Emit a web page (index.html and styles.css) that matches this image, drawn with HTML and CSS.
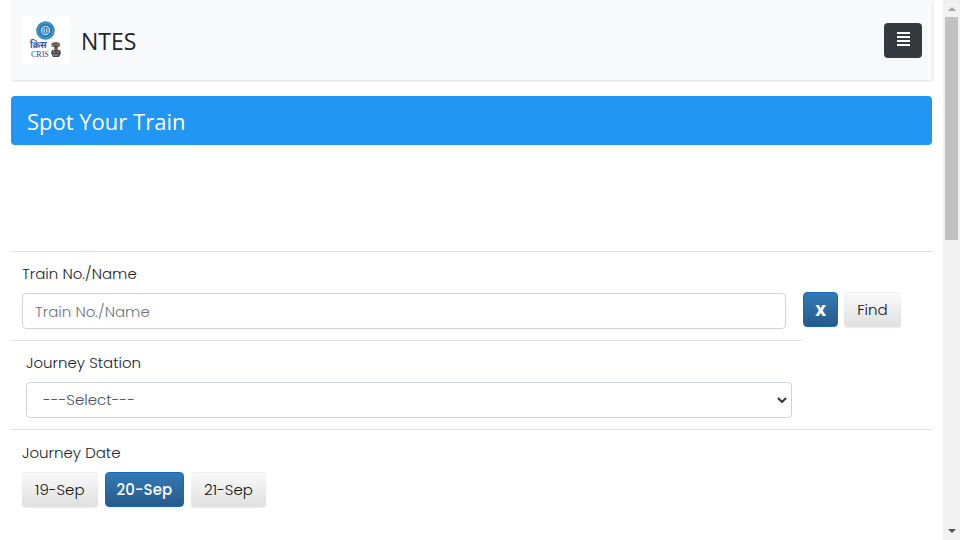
FILE: index.html
```html
<!DOCTYPE html>
<html lang="en">
<head>
<meta charset="utf-8">
<title>NTES</title>
<link rel="stylesheet" href="styles.css">
</head>
<body>
<div class="page">
  <header class="navbar">
    <svg class="logo" viewBox="0 0 48 48" role="img" aria-label="CRIS">
      <rect width="48" height="48" fill="#fff"/>
      <circle cx="23.5" cy="14.5" r="9.3" fill="#2b83b8"/>
      <circle cx="23.5" cy="14.5" r="7.5" fill="none" stroke="#8fc5e0" stroke-width="1" stroke-dasharray="1 1.2"/>
      <circle cx="23.5" cy="14.5" r="5.4" fill="#a9d8ee" stroke="#14649c"/>
      <path d="M20 17h7M21 16v-3.500l2.500-1.500 2.500 1.500V16M23.500 12v4" fill="none" stroke="#286f9c"/>
      <text class="logo-hindi" x="8" y="32">क्रिस</text>
      <text class="logo-name" x="9" y="41">CRIS</text>
      <path d="M29 28q1-2 4.500-2t5 2l-1 3h-1.500v3h-4v-3h-2z" fill="#827566"/>
      <path d="M31 28h1.500m3 0h1M32 30.500h4M34 26v7" stroke="#403936" stroke-width=".8"/>
      <path d="M30 34h8l1 3-2 4h-6l-2-4z" fill="#4c4a49"/>
      <path d="M31 36h2m2 0h2M31 39h5" stroke="#aaa49d"/>
    </svg>
    <span class="brand">NTES</span>
    <button class="menu" type="button" aria-label="Menu">
      <svg viewBox="0 0 13 14" width="13" height="14"><path d="M0 1h13M0 5h13M0 9h13M0 13h13" stroke="#fff" stroke-width="2"/></svg>
    </button>
  </header>
  <main>
    <h1 class="banner">Spot Your Train</h1>
    <form class="search">
      <div class="row train">
        <div class="field">
          <label for="train">Train No./Name</label>
          <input id="train" type="text" placeholder="Train No./Name">
        </div>
        <div class="actions">
          <button class="btn primary clear" type="button">X</button>
          <button class="btn" type="button">Find</button>
        </div>
      </div>
      <div class="row station">
        <label for="station">Journey Station</label>
        <div class="picker">
          <select id="station"><option>---Select---</option></select>
          <svg class="chevron" viewBox="0 0 10 6" width="10" height="6"><path d="M1 1l4 4 4-4" fill="none" stroke="#333" stroke-width="2"/></svg>
        </div>
      </div>
      <fieldset class="row dates">
        <legend>Journey Date</legend>
        <div class="choices">
          <button class="btn" type="button">19-Sep</button>
          <button class="btn primary" type="button">20-Sep</button>
          <button class="btn" type="button">21-Sep</button>
        </div>
      </fieldset>
    </form>
  </main>
</div>
<div class="scrollbar" aria-hidden="true">
  <svg class="arrow" viewBox="0 0 17 17"><path d="M5 11h8l-4-4z" fill="#a3a3a3"/></svg>
  <div class="track"><div class="thumb"></div></div>
  <svg class="arrow" viewBox="0 0 17 17"><path d="M5 6h8l-4 4z" fill="#505050"/></svg>
</div>
</body>
</html>
```
FILE: styles.css
```css
* { box-sizing: border-box; }
body {
  margin: 0;
  height: 100vh;
  overflow: hidden;
  display: grid;
  grid-template-columns: 1fr 17px;
  background: #fff;
  color: #212529;
  font: 300 15px/24px Poppins, Inter, sans-serif;
}
.page { padding: 0 11px; overflow: hidden; }
.navbar {
  display: flex;
  align-items: center;
  height: 80px;
  padding: 0 10px 0 11px;
  background: #f8f9fa;
  box-shadow: 1px 1px 2px rgba(0, 0, 0, .12);
}
.logo { width: 48px; height: 48px; }
.logo-hindi { font: bold 9px/9px "Noto Sans Devanagari", "Noto Sans", sans-serif; fill: #2d5bab; }
.logo-name { font: 8px/8px "Liberation Serif", serif; fill: #1d4590; }
.brand { margin-left: 11px; padding-top: 2px; font: 400 23px/36px "Segoe UI", "Open Sans", sans-serif; }
.menu {
  margin-left: auto;
  display: flex;
  align-items: center;
  justify-content: center;
  width: 38px;
  height: 35px;
  padding: 0 0 2px;
  border: 0;
  border-radius: 4px;
  background: #343a40;
}
.banner {
  margin: 16px 0 106px;
  padding: 9px 16px 7px;
  border-radius: 4px;
  background: #2196f3;
  color: #fff;
  font: 400 22px/33px "Segoe UI", "Open Sans", sans-serif;
}
.search { margin: 0; }
.row { border-top: 1px solid #dee2e6; padding: 10px 11px 11px; }
.train { display: flex; align-items: flex-end; }
.field { flex: 0 0 85%; margin-right: 17px; }
label, legend { display: block; height: 24px; margin-bottom: 7px; padding: 0; }
input, select {
  display: block;
  width: 100%;
  height: 36px;
  border: 1px solid #ced4da;
  border-radius: 4px;
  background: #fff;
  color: #495057;
  font: inherit;
}
input { padding: 0 12px; }
input::placeholder { color: #6c757d; opacity: 1; }
.station { width: 86%; padding-left: 15px; }
.picker { position: relative; }
select { appearance: none; padding: 0 16px; }
.chevron { position: absolute; right: 5px; top: 15px; pointer-events: none; }
.dates { margin: 0; padding-top: 11px; border-width: 1px 0 0; }
legend { float: left; width: 100%; }
.choices, .actions { clear: both; display: flex; gap: 7px; }
.actions { gap: 6px; padding-bottom: 2px; }
.btn {
  height: 35px;
  padding: 0 13px;
  border: 0;
  border-radius: 3px;
  background: linear-gradient(#fafafa, #e0e0e0);
  box-shadow: inset 0 1px #eee, 0 1px 1px rgba(0, 0, 0, .08);
  color: #111;
  font: inherit;
}
.primary {
  padding: 0 11px;
  border: 1px solid #1768bd;
  border-radius: 4px;
  background: linear-gradient(#337ab7, #265a88);
  box-shadow: none;
  color: #fff;
  font-weight: 500;
}
.clear { width: 35px; padding: 0; font: 800 15px/24px "Open Sans", sans-serif; }
.scrollbar { display: flex; flex-direction: column; background: #f1f1f1; }
.arrow { width: 17px; height: 17px; }
.track { flex: 1; padding: 0 2px; }
.thumb { height: 44%; background: #c1c1c1; }
```
